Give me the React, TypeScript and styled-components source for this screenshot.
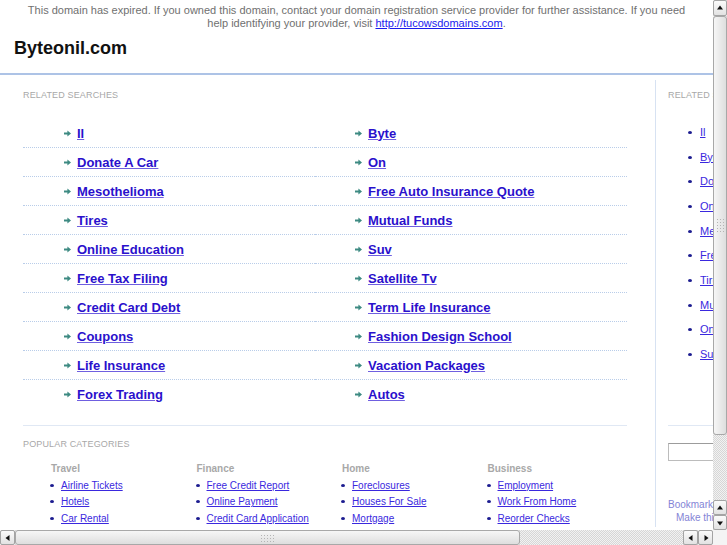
import React from "react";
import styled, { createGlobalStyle } from "styled-components";

const GlobalStyle = createGlobalStyle`
  html, body {
    margin: 0;
    padding: 0;
    background: #ffffff;
    overflow: hidden;
  }
  body {
    font-family: "Liberation Sans", Arial, sans-serif;
  }
`;

const Screen = styled.div`
  display: grid;
  grid-template-columns: 713px 14px;
  grid-template-rows: 530px 15px;
  width: 727px;
  height: 545px;
  overflow: hidden;
`;

const Viewport = styled.div`
  overflow: hidden;
  background: #fff;
`;

const Notice = styled.div`
  width: 713px;
  padding-top: 4px;
  text-align: center;
  font-size: 11px;
  line-height: 13px;
  color: #707070;
`;

const NoticeLink = styled.a`
  color: #1a1aee;
  text-decoration: underline;
`;

const SiteTitle = styled.h1`
  margin: 7px 0 0;
  padding-left: 14px;
  font-size: 18px;
  line-height: 22px;
  font-weight: bold;
  color: #111;
`;

const TopRule = styled.div`
  width: 713px;
  margin-top: 14px;
  border-top: 2px solid #adc3e6;
`;

const Main = styled.div`
  display: flex;
  width: 900px;
  margin-top: 5px;
`;

const LeftPanel = styled.div`
  box-sizing: border-box;
  width: 655px;
  flex: none;
  padding: 10px 28px 0 23px;
`;

const SectionTitle = styled.div`
  font-size: 9px;
  line-height: 11px;
  letter-spacing: 0.15px;
  text-transform: uppercase;
  color: #a8a8a8;
  white-space: nowrap;
`;

const SearchGrid = styled.div`
  display: grid;
  grid-template-columns: 292px 312px;
  margin-top: 18px;
`;

const SearchCell = styled.div<{ $last?: boolean; $inset: number }>`
  display: flex;
  align-items: center;
  gap: 6px;
  height: 28px;
  padding-left: ${(p) => p.$inset}px;
  border-bottom: ${(p) => (p.$last ? "none" : "1px dotted #b9cde9")};
`;

const BigLink = styled.a`
  font-size: 13px;
  line-height: 15px;
  font-weight: bold;
  color: #2a10cc;
  text-decoration: underline;
  text-decoration-color: #6f5fe0;
  white-space: nowrap;
`;

const PopularBlock = styled.div`
  margin-top: 17px;
  padding-top: 13px;
  border-top: 1px solid #e0e8f4;
`;

const CategoryGrid = styled.div`
  display: grid;
  grid-template-columns: repeat(4, 145.5px);
  margin-top: 12px;
  padding-left: 27px;
`;

const CategoryTitle = styled.div`
  padding-left: 1px;
  font-size: 10px;
  line-height: 13px;
  font-weight: bold;
  color: #a8a8a8;
`;

const SmallList = styled.ul`
  list-style: none;
  margin: 2px 0 0;
  padding: 0;
`;

const SmallItem = styled.li`
  display: flex;
  align-items: center;
  gap: 7px;
  height: 16.5px;
`;

const Bullet = styled.span`
  flex: none;
  width: 4px;
  height: 3px;
  border-radius: 50%;
  background: #1c1c90;
`;

const SmallLink = styled.a`
  font-size: 10px;
  line-height: 13px;
  color: #3a28de;
  text-decoration: underline;
  white-space: nowrap;
`;

const SidePanel = styled.div`
  width: 220px;
  flex: none;
  padding: 10px 0 0 12px;
  border-left: 1px solid #d7e2f2;
`;

const SideList = styled.ul`
  list-style: none;
  margin: 19px 0 0;
  padding: 0 0 0 20px;
`;

const SideItem = styled.li`
  display: flex;
  align-items: center;
  gap: 8px;
  height: 24.7px;
`;

const SideLink = styled.a`
  font-size: 11px;
  line-height: 13px;
  color: #3a28de;
  text-decoration: underline;
  white-space: nowrap;
`;

const SideRule = styled.div`
  width: 170px;
  margin-top: 58px;
  border-top: 1px solid #e0e8f4;
`;

const SearchBox = styled.input`
  display: block;
  box-sizing: border-box;
  width: 150px;
  height: 18px;
  margin: 17px 0 0;
  border: 1px solid #bcbcbc;
  border-top-color: #9c9c9c;
  background: #fff;
`;

const Bookmark = styled.div<{ $indent?: number }>`
  padding-left: ${(p) => p.$indent ?? 0}px;
  font-size: 10px;
  line-height: 13px;
  color: #8484d6;
  white-space: nowrap;
`;

const BookmarkBlock = styled.div`
  margin-top: 37px;
`;

/* scrollbars */

const VScroll = styled.div`
  display: flex;
  flex-direction: column;
  background: repeating-conic-gradient(#d6d6d6 0 25%, #f2f2f2 0 50%) 0 0 / 2px 2px;
`;

const HScroll = styled.div`
  display: flex;
  background: repeating-conic-gradient(#d6d6d6 0 25%, #f2f2f2 0 50%) 0 0 / 2px 2px;
`;

const Corner = styled.div`
  background: #f4f4f4;
`;

const ScrollButton = styled.div<{ $len: number; $horizontal?: boolean }>`
  box-sizing: border-box;
  flex: none;
  display: flex;
  align-items: center;
  justify-content: center;
  width: ${(p) => (p.$horizontal ? `${p.$len}px` : "14px")};
  height: ${(p) => (p.$horizontal ? "15px" : `${p.$len}px`)};
  border: 1px solid #a4a4a4;
  border-radius: 2px;
  background: linear-gradient(#fbfbfb, #e2e2e2);
`;

const Thumb = styled.div<{ $len: number; $horizontal?: boolean }>`
  box-sizing: border-box;
  flex: none;
  display: flex;
  align-items: center;
  justify-content: center;
  width: ${(p) => (p.$horizontal ? `${p.$len}px` : "14px")};
  height: ${(p) => (p.$horizontal ? "15px" : `${p.$len}px`)};
  border: 1px solid #a8a8a8;
  border-radius: 3px;
  background: ${(p) =>
    p.$horizontal
      ? "linear-gradient(#f6f6f6, #dedede)"
      : "linear-gradient(90deg, #f6f6f6, #dedede)"};
`;

const Track = styled.div`
  flex: 1;
`;

const Grip = styled.div<{ $horizontal?: boolean }>`
  width: ${(p) => (p.$horizontal ? "16px" : "8px")};
  height: ${(p) => (p.$horizontal ? "8px" : "16px")};
  background: radial-gradient(circle, #b4b4b4 0.7px, transparent 0.8px) 0 0 / 3px 3px;
`;

const Arrow = () => (
  <svg width="7" height="7" viewBox="0 0 7 7" style={{ flex: "none" }}>
    <path d="M0 2.6h3.4V0.6L7 3.5 3.4 6.4V4.4H0z" fill="#3d8a82" />
  </svg>
);

const Tri = ({ dir }: { dir: "up" | "down" | "left" | "right" }) => {
  const d = {
    up: "M1 5.5L4 1.5 7 5.5z",
    down: "M1 2.5L4 6.5 7 2.5z",
    left: "M5.5 1L1.5 4 5.5 7z",
    right: "M2.5 1L6.5 4 2.5 7z",
  }[dir];
  return (
    <svg width="8" height="8" viewBox="0 0 8 8">
      <path d={d} fill="#111" />
    </svg>
  );
};

const searches: [string, string][] = [
  ["Il", "Byte"],
  ["Donate A Car", "On"],
  ["Mesothelioma", "Free Auto Insurance Quote"],
  ["Tires", "Mutual Funds"],
  ["Online Education", "Suv"],
  ["Free Tax Filing", "Satellite Tv"],
  ["Credit Card Debt", "Term Life Insurance"],
  ["Coupons", "Fashion Design School"],
  ["Life Insurance", "Vacation Packages"],
  ["Forex Trading", "Autos"],
];

const categories = [
  { title: "Travel", links: ["Airline Tickets", "Hotels", "Car Rental"] },
  { title: "Finance", links: ["Free Credit Report", "Online Payment", "Credit Card Application"] },
  { title: "Home", links: ["Foreclosures", "Houses For Sale", "Mortgage"] },
  { title: "Business", links: ["Employment", "Work From Home", "Reorder Checks"] },
];

const sideLinks = [
  "Il",
  "Byte",
  "Donate A Car",
  "On",
  "Mesothelioma",
  "Free Auto Insurance Quote",
  "Tires",
  "Mutual Funds",
  "Online Education",
  "Suv",
];

export default function App() {
  return (
    <>
      <GlobalStyle />
      <Screen>
        <Viewport>
          <Notice>
            This domain has expired. If you owned this domain, contact your domain registration
            service provider for further assistance. If you need
            <br />
            help identifying your provider, visit{" "}
            <NoticeLink href="#">http://tucowsdomains.com</NoticeLink>.
          </Notice>
          <SiteTitle>Byteonil.com</SiteTitle>
          <TopRule />
          <Main>
            <LeftPanel>
              <SectionTitle>Related Searches</SectionTitle>
              <SearchGrid>
                {searches.map(([a, b], i) => {
                  const last = i === searches.length - 1;
                  return (
                    <React.Fragment key={a + b}>
                      <SearchCell $last={last} $inset={41}>
                        <Arrow />
                        <BigLink href="#">{a}</BigLink>
                      </SearchCell>
                      <SearchCell $last={last} $inset={40}>
                        <Arrow />
                        <BigLink href="#">{b}</BigLink>
                      </SearchCell>
                    </React.Fragment>
                  );
                })}
              </SearchGrid>
              <PopularBlock>
                <SectionTitle>Popular Categories</SectionTitle>
                <CategoryGrid>
                  {categories.map((c) => (
                    <div key={c.title}>
                      <CategoryTitle>{c.title}</CategoryTitle>
                      <SmallList>
                        {c.links.map((l) => (
                          <SmallItem key={l}>
                            <Bullet />
                            <SmallLink href="#">{l}</SmallLink>
                          </SmallItem>
                        ))}
                      </SmallList>
                    </div>
                  ))}
                </CategoryGrid>
              </PopularBlock>
            </LeftPanel>
            <SidePanel>
              <SectionTitle>Related Searches</SectionTitle>
              <SideList>
                {sideLinks.map((l) => (
                  <SideItem key={l}>
                    <Bullet />
                    <SideLink href="#">{l}</SideLink>
                  </SideItem>
                ))}
              </SideList>
              <SideRule />
              <SearchBox type="text" />
              <BookmarkBlock>
                <Bookmark>Bookmark this page</Bookmark>
                <Bookmark $indent={8}>Make this your homepage</Bookmark>
              </BookmarkBlock>
            </SidePanel>
          </Main>
        </Viewport>
        <VScroll>
          <ScrollButton $len={16}>
            <Tri dir="up" />
          </ScrollButton>
          <Thumb $len={419}>
            <Grip />
          </Thumb>
          <Track />
          <ScrollButton $len={15}>
            <Tri dir="up" />
          </ScrollButton>
          <ScrollButton $len={15}>
            <Tri dir="down" />
          </ScrollButton>
        </VScroll>
        <HScroll>
          <ScrollButton $len={15} $horizontal>
            <Tri dir="left" />
          </ScrollButton>
          <Thumb $len={505} $horizontal>
            <Grip $horizontal />
          </Thumb>
          <Track />
          <ScrollButton $len={15} $horizontal>
            <Tri dir="left" />
          </ScrollButton>
          <ScrollButton $len={15} $horizontal>
            <Tri dir="right" />
          </ScrollButton>
        </HScroll>
        <Corner />
      </Screen>
    </>
  );
}
